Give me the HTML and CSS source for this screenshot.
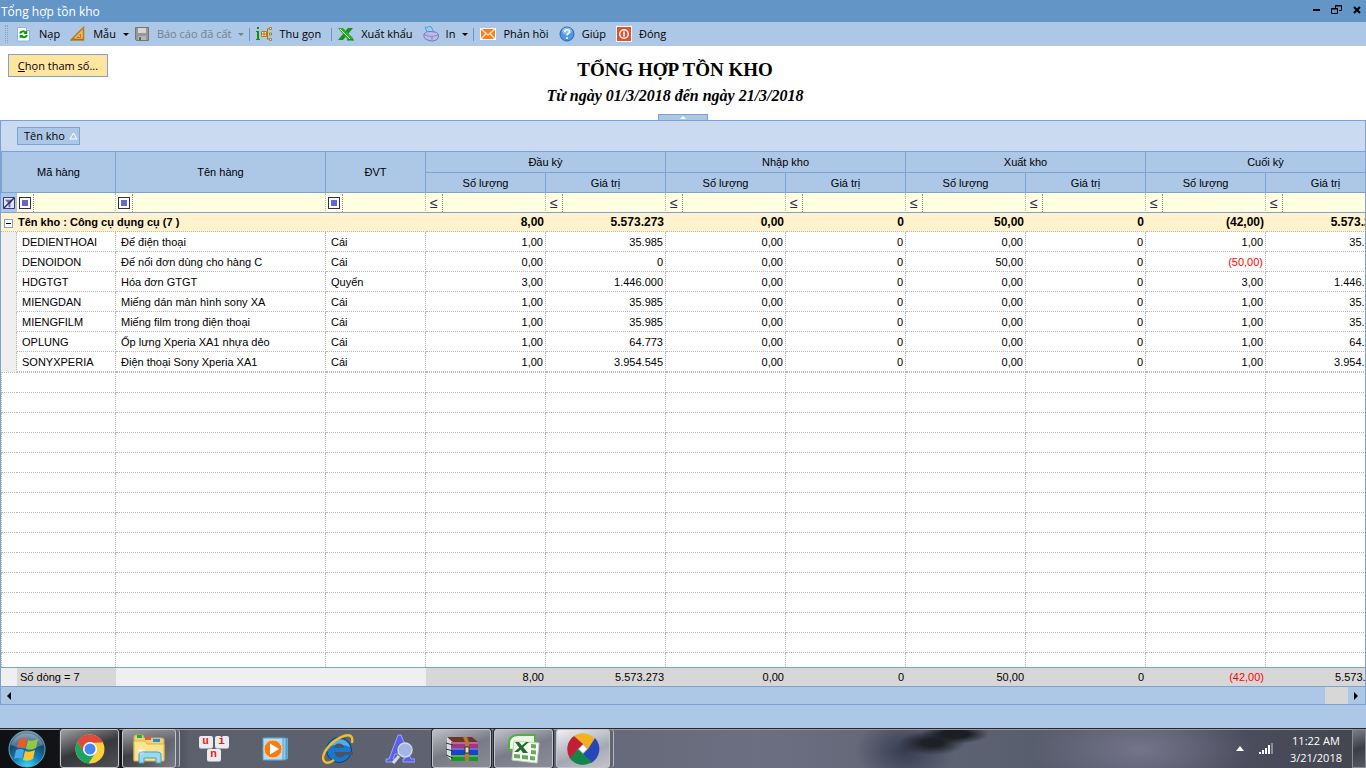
FILE: index.html
```html
<!DOCTYPE html>
<html lang="vi">
<head>
    <meta charset="UTF-8">
    <meta name="viewport" content="width=device-width, initial-scale=1.0">
    <title>Tổng hợp tồn kho</title>
    <link rel="stylesheet" href="styles.css">
</head>
<body>
    <header class="titlebar">
        <span class="titlebar-text">Tổng hợp tồn kho</span>
        <div class="window-buttons">
            <button type="button" aria-label="Minimize"><svg width="12" height="12" viewBox="0 0 12 12"><path d="M2 5h7v2H2z"/></svg></button>
            <button type="button" aria-label="Restore"><svg width="12" height="12" viewBox="0 0 12 12"><path d="M4.500 4V1.500h6v5H8M4 2h7M.5 4.500h6v5h-6zM0 5h7" fill="none" stroke="#000"/></svg></button>
            <button type="button" aria-label="Close"><svg width="12" height="12" viewBox="0 0 12 12"><path d="M3 3l6 6M9 3L3 9" fill="none" stroke="#000" stroke-width="2"/></svg></button>
        </div>
    </header>

    <nav class="toolbar">
        <span class="grip"></span>
        <button type="button" class="tool">
            <svg width="16" height="16" viewBox="0 0 16 16"><path d="M1.500 1.500h9l3 3V15h-12z" fill="#fff" stroke="#8fb3d9"/><path d="M10.500 1.500v3h3" fill="#d5e5f5" stroke="#8fb3d9"/><path d="M4 7.500c1-2.500 4-2.800 5.500-1M11 9c-1 2.600-4 3-5.800 1.200" fill="none" stroke="#0c9a0c" stroke-width="2"/><path d="M11.300 4v4H7.500zM3.700 12.800V9h3.800z" fill="#0c9a0c"/></svg>
            <span>Nạp</span>
        </button>
        <button type="button" class="tool has-menu">
            <svg width="16" height="16" viewBox="0 0 16 16"><path d="M13.500 1.500V14H1z" fill="#f4b95a" stroke="#b87a1d" stroke-width="1.500"/><path d="M10.500 8v3.500H7z" fill="#c9dcf2" stroke="#b87a1d"/><path d="M4 14v-2M6 14v-1.500M8 14v-1.500M10 14v-1.500M12 14v-1.500" stroke="#8c5a10"/></svg>
            <span>Mẫu</span>
            <i class="caret"></i>
        </button>
        <button type="button" class="tool has-menu" disabled>
            <svg width="16" height="16" viewBox="0 0 16 16"><path d="M1.500 1.500h13v13h-12l-1-1z" fill="#979797" stroke="#747474"/><path d="M4 2h8v5H4z" fill="#d6d6d6"/><path d="M4 10h8v4H4z" fill="#b7b7b7"/><path d="M5 11h2v3H5z" fill="#666"/></svg>
            <span>Báo cáo đã cất</span>
            <i class="caret"></i>
        </button>
        <span class="separator"></span>
        <button type="button" class="tool">
            <svg width="16" height="16" viewBox="0 0 16 16"><path d="M1 1h2v2H1zM0 5h3v8h1v1H0v-1h1V6H0z" fill="#0a960a"/><path d="M9 8h3M11.500 3v10M11 3h2M11 13h2" fill="none" stroke="#a87525"/><path d="M5.500 5.500h5v5h-5z" fill="#ffe9a8" stroke="#b07a22"/><path d="M6 8h4M8 6v4" stroke="#bd6d00"/><path d="M13.500 1.500h2v2h-2zM13.500 7h2v2h-2zM13.500 12.500h2v2h-2z" fill="#ffe4a0" stroke="#b07a22"/></svg>
            <span>Thu gọn</span>
        </button>
        <span class="separator"></span>
        <button type="button" class="tool">
            <svg width="16" height="16" viewBox="0 0 16 16"><path d="M15 2h-5L0 14h5z" fill="#16911c"/><path d="M0 2h5l10 10v2h-5z" fill="#2fab2f"/><path d="M2 3l10 10" stroke="#d2f2c8"/><path d="M9 14h7" fill="none" stroke="#0c7d16"/></svg>
            <span>Xuất khẩu</span>
        </button>
        <button type="button" class="tool has-menu">
            <svg width="16" height="16" viewBox="0 0 16 16"><path d="M2 1.500l6-1 3 6-6 1z" fill="#8fd2f7" stroke="#4c9fd6"/><path d="M1 8q2-3 6-2.500l5 .5q4 1 3.500 5-1 4-6 4-7-.5-8.500-4z" fill="#bdbce8" stroke="#7777b8"/><path d="M1.500 8.500q6 3.500 13.500.500M9 10.500v4" fill="none" stroke="#8585c6"/></svg>
            <span>In</span>
            <i class="caret"></i>
        </button>
        <span class="separator"></span>
        <button type="button" class="tool">
            <svg width="16" height="16" viewBox="0 0 16 16"><path d="M0 2h16v12H0z" fill="#fff"/><path d="M1 3h14v10H1z" fill="#f58220"/><path d="M1 3l7 6 7-6M1 13l5-5.500M15 13l-5-5.500" fill="none" stroke="#ffe6c8" stroke-width="1.200"/></svg>
            <span>Phản hồi</span>
        </button>
        <button type="button" class="tool">
            <svg width="16" height="16" viewBox="0 0 16 16"><circle cx="8" cy="8" r="7" fill="#4f97e0" stroke="#2563ad"/><ellipse cx="8" cy="5" rx="5" ry="3.500" fill="#8cc1f3"/><path d="M5.800 6c0-3 4.600-3 4.600-.2C10.400 7.500 8 7.600 8 9.600" fill="none" stroke="#fff" stroke-width="1.600"/><circle cx="8" cy="12" r="1" fill="#fff"/></svg>
            <span>Giúp</span>
        </button>
        <button type="button" class="tool">
            <svg width="16" height="16" viewBox="0 0 16 16"><path d="M0 0h16v16H0z" fill="#fff"/><path d="M1 1h14v14H1z" fill="#e0502a"/><circle cx="8" cy="8" r="4.300" fill="none" stroke="#fff" stroke-width="1.500"/><path d="M8 5.500v5" stroke="#fff" stroke-width="1.600"/></svg>
            <span>Đóng</span>
        </button>
    </nav>

    <section class="report-head">
        <button type="button" class="param-button"><u>C</u>họn tham số...</button>
        <div class="report-titles">
            <h1>TỔNG HỢP TỒN KHO</h1>
            <p>Từ ngày 01/3/2018 đến ngày 21/3/2018</p>
        </div>
        <button type="button" class="collapse" aria-label="Collapse"></button>
    </section>

    <main class="grid">
        <div class="group-panel">
            <button type="button" class="group-chip">
                <span>Tên kho</span>
                <svg width="9" height="8" viewBox="0 0 9 8"><path d="M4.500 1L8 7H1z" fill="none" stroke="#fff"/></svg>
            </button>
        </div>

        <div class="grid-body">
            <table>
                <colgroup>
                    <col class="c-indent"><col class="c-code"><col class="c-name"><col class="c-unit">
                    <col span="8" class="c-num">
                </colgroup>
                <thead>
                    <tr class="bands">
                        <th colspan="2" rowspan="2" class="first">Mã hàng</th>
                        <th rowspan="2">Tên hàng</th>
                        <th rowspan="2">ĐVT</th>
                        <th colspan="2">Đầu kỳ</th>
                        <th colspan="2">Nhập kho</th>
                        <th colspan="2">Xuất kho</th>
                        <th colspan="2">Cuối kỳ</th>
                    </tr>
                    <tr class="columns">
                        <th>Số lượng</th><th>Giá trị</th>
                        <th>Số lượng</th><th>Giá trị</th>
                        <th>Số lượng</th><th>Giá trị</th>
                        <th>Số lượng</th><th>Giá trị</th>
                    </tr>
                    <tr class="filters" id="filters">
                        <td class="filter-clear">
                            <svg width="12" height="12" viewBox="0 0 13 13"><path d="M.5.5h12v12H.5z" fill="#dfe6fa" stroke="#2b2b60"/><path d="M2 3h9L8 7v4H6V7z" fill="#6666cc"/><path d="M1 12L12 1" stroke="#2b2b60" stroke-width="1.500"/></svg>
                        </td>
                    </tr>
                </thead>
                <tbody id="rows">
                    <tr class="group-row">
                        <td colspan="4"><button type="button" class="expander" aria-label="Collapse group"></button>Tên kho : Công cụ dụng cụ (7 )</td>
                        <td>8,00</td><td>5.573.273</td>
                        <td>0,00</td><td>0</td>
                        <td>50,00</td><td>0</td>
                        <td>(42,00)</td><td>5.573.273</td>
                    </tr>
                </tbody>
                <tfoot>
                    <tr>
                        <td></td>
                        <td class="count">Số dòng = 7</td>
                        <td></td><td></td>
                        <td class="sum">8,00</td><td class="sum">5.573.273</td>
                        <td class="sum">0,00</td><td class="sum">0</td>
                        <td class="sum">50,00</td><td class="sum">0</td>
                        <td class="sum negative">(42,00)</td><td class="sum">5.573.273</td>
                    </tr>
                </tfoot>
            </table>
        </div>

        <div class="scrollbar">
            <button type="button" class="scroll-left" aria-label="Scroll left"></button>
            <span class="scroll-thumb"></span>
            <button type="button" class="scroll-right" aria-label="Scroll right"></button>
        </div>
    </main>

    <footer class="taskbar">
        <button type="button" class="start" aria-label="Start">
            <svg width="40" height="38" viewBox="0 0 40 38">
                <defs>
                    <radialGradient id="orb" cx="50%" cy="100%" r="95%"><stop offset="0" stop-color="#35e0ff"/><stop offset=".4" stop-color="#137eb5"/><stop offset=".75" stop-color="#14466f"/><stop offset="1" stop-color="#6d8ea8"/></radialGradient>
                </defs>
                <circle cx="20" cy="19" r="18" fill="url(#orb)" stroke="#6fa4bd"/>
                <path d="M4 15a16.500 15 0 0132 0q-16 7-32 0z" fill="#fff" opacity=".25"/>
                <path d="M12 10q4-3 8-1l-2 9q-4-2-8 0z" fill="#ee5a24"/>
                <path d="M21 10q4 2 10-1l-2 9q-5 3-10 1z" fill="#94c93d"/>
                <path d="M9 20q4-2 8 0l-2 9q-4-2-8 0z" fill="#4aa8e8"/>
                <path d="M18 21q4 2 10-1l-2 9q-5 3-10 1z" fill="#fdc32e"/>
            </svg>
        </button>
        <button type="button" class="task open" aria-label="Chrome">
            <svg width="30" height="30" viewBox="0 0 30 30"><circle cx="15" cy="15" r="14.500" fill="#fdd03b"/><path d="M2.400 7.800A14.500 14.500 0 0127.600 7.800L15 9z" fill="#dd4b3e"/><path d="M2.400 7.800A14.500 14.500 0 0013.500 29.400L20.600 18.500 9.500 18z" fill="#1da462"/><path d="M2.400 7.800L9 18 15 8.500h12.900A14 14 0 0026 5H4z" fill="#dd4b3e"/><circle cx="15" cy="15" r="7" fill="#fff"/><circle cx="15" cy="15" r="5.500" fill="#4688f1"/></svg>
        </button>
        <button type="button" class="task open stacked" aria-label="Explorer">
            <svg width="34" height="32" viewBox="0 0 34 32"><path d="M2 4q0-2 2-2h7l1 3h18q2 0 2 2v20H2z" fill="#ecd27a" stroke="#cfae4c"/><path d="M5 2h5v3H5z" fill="#27a844"/><path d="M13 4h6v3h-6z" fill="#e6553b"/><path d="M21 6h7v3h-7z" fill="#2b8ae0"/><path d="M2 8h11l2 3h17v17H2z" fill="#f8e38f" stroke="#d8b54b"/><path d="M7 30v-9q0-2 3-2h15q4 0 4 2v9h-5v-5H12v5z" fill="#9bd8ee" stroke="#459fc6"/><path d="M9 13v9M5 17.500h8M6 14.500l6 6M12 14.500l-6 6" stroke="#fff" opacity=".6"/></svg>
        </button>
        <button type="button" class="task" aria-label="Unikey">
            <span class="keys"><b>u</b><b>i</b><b>n</b></span>
        </button>
        <button type="button" class="task" aria-label="Media Player">
            <svg width="28" height="28" viewBox="0 0 28 28"><path d="M7 3h19v21H7z" fill="#5fa8d3"/><path d="M5 3h19v22H5z" fill="#92cbe9" stroke="#4e95c2"/><path d="M1 3h20v22H1z" fill="#b6def3" stroke="#579fca"/><circle cx="11" cy="14" r="9" fill="#f57c18" stroke="#fbd0a0"/><path d="M8 8.500v11l9-5.500z" fill="#fff"/></svg>
        </button>
        <button type="button" class="task" aria-label="Internet Explorer">
            <svg width="34" height="32" viewBox="0 0 34 32">
                <circle cx="18" cy="17" r="12.500" fill="#1879cc" stroke="#0c4070"/>
                <path d="M7 14a11.500 11 0 0122 0q-11-5-22 0z" fill="#6cc3f4" opacity=".7"/>
                <path d="M13 15q.5-4.500 5-4.500t5 4.500zM13 19h19v3h-8q-2 2.500-5.500 2.500T13 19z" fill="#4a5468"/>
                <path d="M31 10q2-10-8-7C11 7-1 21 3 28q3 4 10-1" fill="none" stroke="#f2bd2c" stroke-width="2.400"/>
            </svg>
        </button>
        <button type="button" class="task" aria-label="Search">
            <svg width="30" height="30" viewBox="0 0 30 30"><path d="M13 1h3l10 24h4v3H18v-3h2l-2-5h-8l-2 5h3v3H1v-3h3z" fill="#5a60ee" stroke="#9ea7f5"/><path d="M14 9l3 8h-6z" fill="#555967"/><path d="M14 22L8 29" stroke="#d3d8e2" stroke-width="3"/><circle cx="20" cy="16" r="7" fill="#a8bfe9" stroke="#dbe3f2" stroke-width="1.500" opacity=".9"/></svg>
        </button>
        <button type="button" class="task open" aria-label="WinRAR">
            <svg width="34" height="26" viewBox="0 0 34 26"><path d="M2 1h25l6 5H8z" fill="#6d3524"/><path d="M2 1l5 5v19l-5-5z" fill="#dcdcdc"/><path d="M6 6h27v6H6z" fill="#a13683"/><path d="M6 12h27v7H6z" fill="#1845c8"/><path d="M6 19h27v6H6z" fill="#159b1d"/><path d="M6 7h27M6 13h27M6 20h27" stroke="#e7c1e1" opacity=".7"/><path d="M1 7l7 2M1 13l7 2M1 19l7 3" stroke="#333"/><path d="M18 1h4l2 5v19h-4V6z" fill="#b77a32"/><path d="M20 11h4v6h-4z" fill="#f3e2a7" stroke="#333"/></svg>
        </button>
        <button type="button" class="task open" aria-label="Excel">
            <svg width="32" height="30" viewBox="0 0 32 30"><path d="M1 16V10q0-9 9-9h17v14z" fill="#eaf7e4" stroke="#55ad3a" stroke-width="2"/><path d="M6 7l25 2-2 20L4 26z" fill="#f7fbf5" stroke="#c4d6be"/><path d="M23 10l5 .5v4l-5-.5zM23 16l5 .5v4l-5-.5zM22 22l5 .5v4l-5-.5zM14 21l6 .5v4l-6-.5zM6 20l6 .5v4l-6-.5z" fill="#6da860"/><path d="M7 8h4l9 11h-5zM18 8h3L10 18H6z" fill="#236e2c"/></svg>
        </button>
        <button type="button" class="task open stacked active" aria-label="MISA">
            <svg width="34" height="34" viewBox="0 0 34 34"><path d="M8 4l9 8 5 5 7-10A16 16 0 008 4z" fill="#f4b11e"/><path d="M29 6a16 16 0 01-4 25l-8-9 5-5z" fill="#2746b8"/><path d="M26 30A16 16 0 013 25l9-8 5 5z" fill="#158549"/><path d="M4 26A16 16 0 018 4l9 8-5 5z" fill="#c21f37"/><path d="M17 13l4 4-4 4-4-4z" fill="#fff"/></svg>
        </button>

        <div class="tray">
            <svg width="8" height="5" viewBox="0 0 8 5"><path d="M4 0l4 5H0z" fill="#fff"/></svg>
            <svg width="16" height="13" viewBox="0 0 16 13"><path d="M1 10h2v2H1zM4 8h2v4H4zM7 6h2v6H7zM10 3h2v9h-2z" fill="#fff"/><path d="M13 1h2v11h-2z" fill="#8b8e99"/></svg>
            <div class="clock"><span>11:22 AM</span><span>3/21/2018</span></div>
            <button type="button" class="show-desktop" aria-label="Show desktop"></button>
        </div>
    </footer>

    <script src="script.js"></script>
</body>
</html>
```
FILE: styles.css
```css
:root {
    --bar: #adc7e7;
    --title: #6495c7;
    --panel: #cadbf1;
    --line: #7ba2d0;
    --dots: #b9b9b9;
    --ink: #2b2b60;
    --ui: "Open Sans", "Noto Sans", sans-serif;
    --grid: "Liberation Sans", Arial, sans-serif;
}

*,
*::before,
*::after {
    margin: 0;
    padding: 0;
    box-sizing: border-box;
}

body {
    height: 100vh;
    display: flex;
    flex-direction: column;
    background: var(--bar);
    color: #000;
    font-family: var(--grid);
    font-size: 11px;
    overflow: hidden;
}

button {
    border: none;
    background: none;
    color: inherit;
    font: inherit;
}

svg {
    display: block;
    flex: none;
}

/* Window title */
.titlebar {
    flex: none;
    display: flex;
    justify-content: space-between;
    height: 22px;
    padding: 0 3px 0 1px;
    background: var(--title);
    color: #fff;
    font: 12px/24px var(--ui);
}

.window-buttons {
    display: flex;
    gap: 8px;
    align-items: flex-start;
    padding-top: 4px;
}

/* Toolbar */
.toolbar {
    flex: none;
    display: flex;
    align-items: center;
    height: 24px;
    padding-left: 5px;
    background: var(--bar);
    font: 11px/16px var(--ui);
}

.grip {
    width: 3px;
    height: 18px;
    margin-right: 4px;
    border-left: 1px dotted #8a9fba;
    border-right: 1px dotted #8a9fba;
}

.tool {
    display: flex;
    align-items: center;
    gap: 7px;
    padding: 0 6px 0 4px;
    white-space: nowrap;
}

.tool.has-menu {
    padding-right: 1px;
}

.tool:disabled {
    color: #75808f;
}

.caret {
    border: 3px solid transparent;
    border-top-color: currentColor;
    border-bottom: none;
}

.separator {
    width: 1px;
    height: 13px;
    margin: 0 2px 0 4px;
    background: var(--title);
}

/* Report heading */
.report-head {
    flex: none;
    position: relative;
    height: 74px;
    padding: 8px;
    background: #fff;
}

.param-button {
    position: absolute;
    left: 8px;
    top: 8px;
    width: 100px;
    height: 23px;
    border: 1px solid var(--line);
    background: #ffe5a0;
    font-family: var(--ui);
}

.report-titles {
    padding: 3px 16px 0 0;
    text-align: center;
    font-family: "Liberation Serif", "Times New Roman", serif;
}

.report-titles h1 {
    font-size: 19px;
    line-height: 26px;
}

.report-titles p {
    font-size: 16px;
    font-weight: bold;
    font-style: italic;
    line-height: 26px;
}

.collapse {
    position: absolute;
    left: 50%;
    bottom: 0;
    width: 50px;
    height: 6px;
    margin-left: -25px;
    border: 1px solid var(--line);
    border-bottom: none;
    background: var(--bar);
}

.collapse::after {
    content: '';
    display: block;
    width: 6px;
    margin: 0 auto;
    border: 3px solid transparent;
    border-top: none;
    border-bottom-color: #fff;
}

/* Grid */
.grid {
    flex: 1;
    min-height: 0;
    display: flex;
    flex-direction: column;
    border: 1px solid var(--line);
    margin-bottom: 23px;
}

.group-panel {
    flex: none;
    display: flex;
    align-items: flex-start;
    height: 30px;
    padding: 6px 16px;
    background: var(--panel);
}

.group-chip {
    display: flex;
    align-items: center;
    gap: 4px;
    height: 18px;
    padding: 0 1px 0 6px;
    border: 1px solid var(--line);
    background: var(--bar);
    font: 11px/14px var(--ui);
}

.grid-body {
    flex: 1;
    min-height: 0;
    overflow: hidden;
    background: #fff;
}

table {
    width: 1385px;
    table-layout: fixed;
    border-collapse: separate;
    border-spacing: 0;
}

.c-indent { width: 16px; }
.c-code { width: 99px; }
.c-name { width: 210px; }
.c-unit { width: 100px; }
.c-num { width: 120px; }

th {
    background: var(--bar);
    border-right: 1px solid var(--line);
    border-bottom: 1px solid var(--line);
    font-weight: normal;
    line-height: 14px;
}

.bands th {
    height: 22px;
    border-top: 1px solid var(--line);
}

.bands .first {
    border-left: 1px solid var(--line);
}

.columns th {
    height: 20px;
}

td {
    height: 20px;
    border-right: 1px dotted var(--dots);
    border-bottom: 1px dotted var(--dots);
    line-height: 14px;
    white-space: nowrap;
}

.filters td {
    background: #ffffe1;
    border-bottom: 1px solid var(--line);
}

.filters .filter-clear {
    padding-left: 2px;
    background: var(--bar);
}

.filter {
    display: flex;
    align-items: center;
    height: 19px;
}

.filter button {
    flex: none;
    width: 17px;
    height: 18px;
    padding-left: 2px;
    border-right: 1px dotted #8c8c8c;
    color: var(--ink);
    font-size: 14px;
    line-height: 16px;
    text-align: left;
}

.filter .contains::before {
    content: '';
    display: block;
    width: 12px;
    height: 12px;
    border: 1px solid var(--ink);
    background: #6666cc;
    box-shadow: inset 0 0 0 2px #fff;
}

.filter .less {
    padding-left: 4px;
}

.filter input {
    flex: 1;
    min-width: 0;
    height: 16px;
    border: none;
    background: none;
    font: inherit;
}

.group-row td {
    height: 19px;
    padding: 0 1px 0 0;
    border-right: 1px solid #fff2cc;
    background: #fff2cc;
    font-size: 12px;
    font-weight: bold;
    text-align: right;
}

.group-row td:first-child {
    font-size: 11px;
    text-align: left;
}

.expander {
    width: 9px;
    height: 9px;
    margin: 0 5px 0 3px;
    border: 1px solid var(--line);
    background: linear-gradient(#000, #000) center / 5px 1px no-repeat #fff;
    vertical-align: -1px;
}

.item td {
    padding-left: 5px;
}

.item td:first-child {
    background: #efefef;
    border-bottom-color: #efefef;
}

.item .num {
    padding: 0 2px 0 0;
    text-align: right;
}

.negative {
    color: #ff0000;
}

.empty td:first-child {
    border-right: none;
    border-left: 1px dotted var(--dots);
}

.item + .empty td {
    height: 21px;
    border-top: 1px dotted var(--dots);
}

/* Totals stay at the bottom of the grid */
tfoot td {
    position: sticky;
    bottom: 0;
    border: none;
    border-top: 1px solid var(--line);
    height: 19px;
    background: #efefef;
}

tfoot .count {
    padding-left: 3px;
    background: #d7d7d7;
}

tfoot .sum {
    padding-right: 2px;
    background: #d7d7d7;
    text-align: right;
}

.scrollbar {
    flex: none;
    display: flex;
    height: 18px;
    border-top: 1px solid var(--line);
    background: var(--bar);
}

.scrollbar button {
    width: 17px;
    padding: 4px 6px;
}

.scrollbar button::before {
    content: '';
    display: block;
    width: 4px;
    border: 4px solid transparent;
}

.scrollbar .scroll-left::before {
    border-left: none;
    border-right-color: #000;
}

.scrollbar .scroll-right::before {
    border-right: none;
    border-left-color: #000;
}

.scroll-thumb {
    width: 23px;
    margin-left: auto;
    background: #d7d7d7;
}

/* Taskbar */
.taskbar {
    flex: none;
    display: flex;
    align-items: center;
    gap: 3px;
    height: 40px;
    border-top: 1px solid #23272e;
    box-shadow: inset 0 1px #9a9da6;
    background:
        radial-gradient(ellipse 34px 10px at 955px 5px, #1c1d22 40%, transparent 100%),
        radial-gradient(ellipse 34px 12px at 932px 14px, #1f2026 30%, transparent 100%),
        radial-gradient(ellipse 50px 34px at 905px 22px, #363c50, transparent 100%),
        radial-gradient(ellipse 110px 50px at 1140px 20px, #74748a, transparent 100%),
        linear-gradient(90deg, #0f1013 0, #15161b 120px, #5c5f6c 190px, #5f6270 420px, #6c6f81 760px, #5a6070 1000px, #4b4c5c 1250px, #43454f 100%);
}

.start {
    width: 57px;
    padding-left: 7px;
}

.task {
    display: flex;
    align-items: center;
    justify-content: center;
    width: 59px;
    height: 39px;
    border: 1px solid transparent;
    border-radius: 3px;
}

.task.open {
    border-color: #c3c5cb;
    background: linear-gradient(160deg, rgba(255,255,255,0.6), rgba(255,255,255,0.15) 50%, rgba(255,255,255,0.25));
    box-shadow: 0 0 0 1px #24262d;
}

.task.stacked {
    width: 54px;
    margin-right: 5px;
    box-shadow: 4px 0 0 -1px #62656f, 5px 0 0 -1px #b5b7be;
}

.task.active {
    background: linear-gradient(160deg, #f0f0f3, #a5a7b2 60%, #c3c4cc);
}

.keys {
    display: grid;
    grid-template-columns: 14px 14px;
    gap: 1px 2px;
    justify-content: center;
}

.keys b {
    width: 14px;
    height: 12px;
    border-radius: 2px;
    background: #ececee;
    box-shadow: 0 1px #a9a9ae;
    color: #e81c24;
    font: bold 11px/11px "Liberation Mono", monospace;
    text-align: center;
}

.keys b:last-child {
    grid-column: 1 / 3;
    justify-self: center;
}

.tray {
    display: flex;
    align-items: center;
    align-self: stretch;
    gap: 14px;
    margin-left: auto;
    color: #fff;
}

.clock {
    display: flex;
    flex-direction: column;
    align-items: center;
    padding: 0 0 0 2px;
    font: 11px/17px var(--ui);
}

.show-desktop {
    align-self: stretch;
    width: 14px;
    margin-left: -4px;
    border: 1px solid #8b8d96;
    background: linear-gradient(160deg, #7c7e88, #3c3e47 50%, #555761);
}
```
FILE: script.js
```js
const items = [
    ['DEDIENTHOAI', 'Đế điện thoại', 'Cái', '1,00', '35.985', '0,00', '0', '0,00', '0', '1,00', '35.985'],
    ['DENOIDON', 'Đế nối đơn dùng cho hàng C', 'Cái', '0,00', '0', '0,00', '0', '50,00', '0', '(50,00)', ''],
    ['HDGTGT', 'Hóa đơn GTGT', 'Quyển', '3,00', '1.446.000', '0,00', '0', '0,00', '0', '3,00', '1.446.000'],
    ['MIENGDAN', 'Miếng dán màn hình sony XA', 'Cái', '1,00', '35.985', '0,00', '0', '0,00', '0', '1,00', '35.985'],
    ['MIENGFILM', 'Miếng film trong điện thoại', 'Cái', '1,00', '35.985', '0,00', '0', '0,00', '0', '1,00', '35.985'],
    ['OPLUNG', 'Ốp lưng Xperia XA1 nhựa dẻo', 'Cái', '1,00', '64.773', '0,00', '0', '0,00', '0', '1,00', '64.773'],
    ['SONYXPERIA', 'Điện thoại Sony Xperia XA1', 'Cái', '1,00', '3.954.545', '0,00', '0', '0,00', '0', '1,00', '3.954.545']
];
const TEXT_COLUMNS = 3;
const EMPTY_ROWS = 60;

const body = document.getElementById('rows');
const filters = document.getElementById('filters');

// One filter box per column: text columns use "contains", numbers use "less or equal"
items[0].forEach((_, i) => {
    const cell = filters.insertCell();
    const isText = i < TEXT_COLUMNS;
    cell.innerHTML = `<div class="filter">
        <button type="button" class="${isText ? 'contains' : 'less'}" aria-label="Filter type">${isText ? '' : '≤'}</button>
        <input type="text" aria-label="Filter ${i + 1}">
    </div>`;
});

items.forEach(item => {
    const row = body.insertRow();
    row.className = 'item';
    row.insertCell();
    item.forEach((value, i) => {
        const cell = row.insertCell();
        cell.textContent = value;
        if (i >= TEXT_COLUMNS) cell.classList.add('num');
        if (value.startsWith('(')) cell.classList.add('negative');
    });
});

// Blank rows fill the rest of the grid
for (let i = 0; i < EMPTY_ROWS; i++) {
    const row = body.insertRow();
    row.className = 'empty';
    for (let c = 0; c < items[0].length + 1; c++) row.insertCell();
}
```
